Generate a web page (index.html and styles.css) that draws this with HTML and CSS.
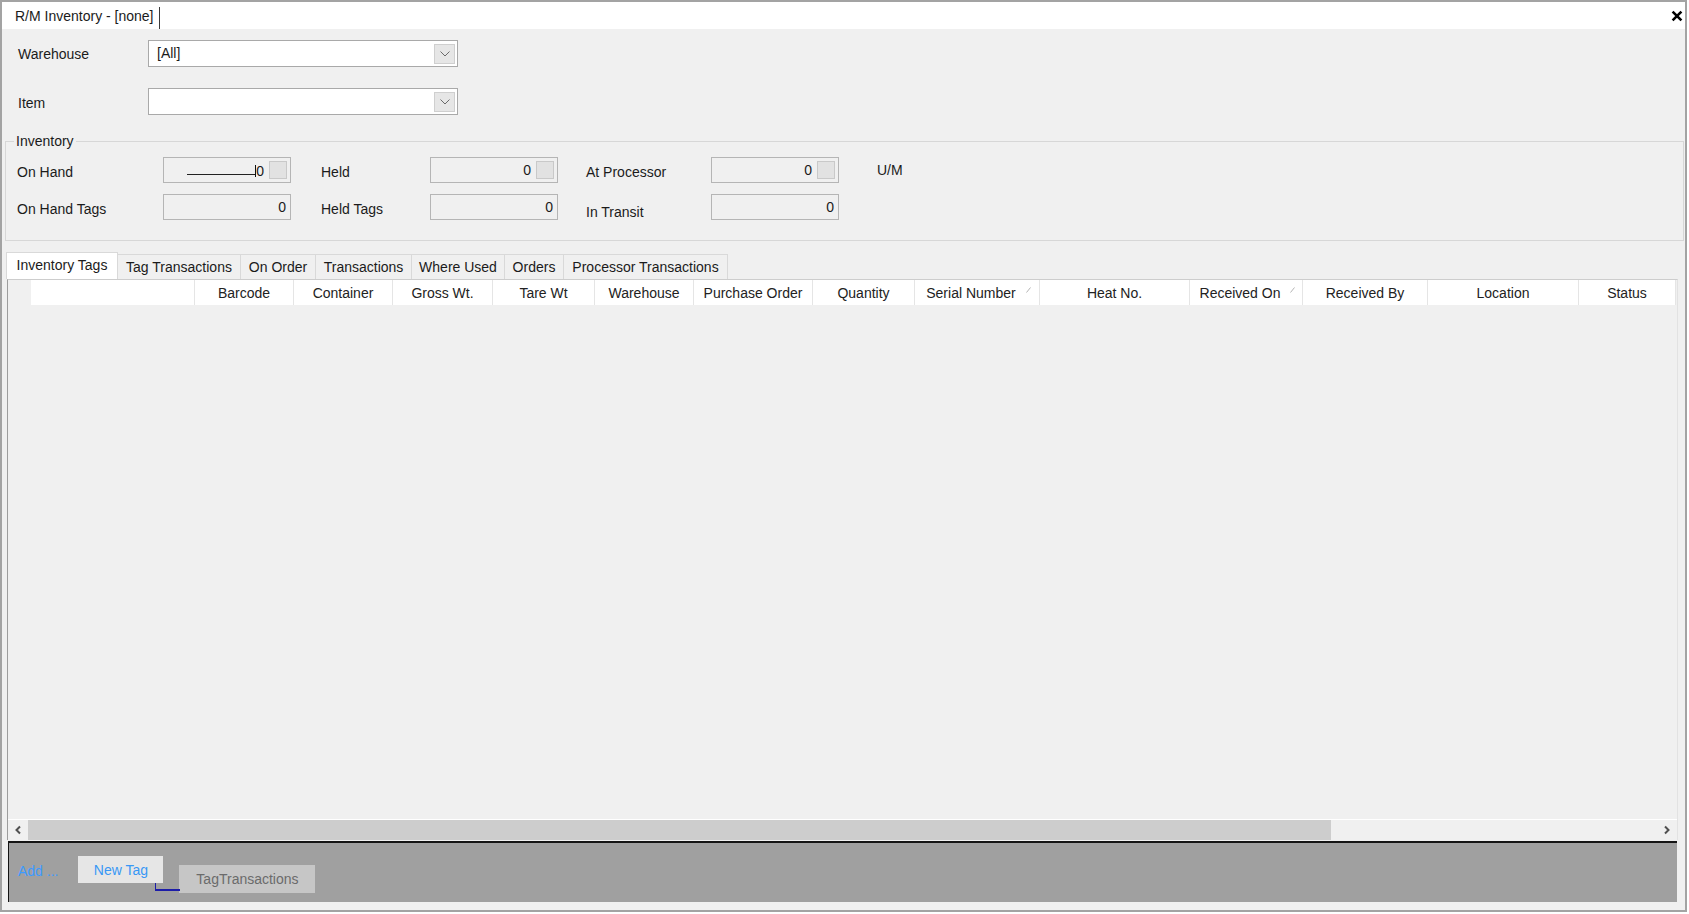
FILE: index.html
```html
<!DOCTYPE html>
<html>
<head>
<meta charset="utf-8">
<title>R/M Inventory</title>
<link rel="stylesheet" href="styles.css">
</head>
<body>
<div class="window">
  <div class="titlebar">
    <div class="doc-tab">R/M Inventory - [none]</div>
    <div class="doc-sep"></div>
    <button class="close" aria-label="Close">
      <svg width="12" height="12" viewBox="0 0 12 12"><path d="M1.6 1.6 L10.4 10.4 M10.4 1.6 L1.6 10.4" stroke="#000" stroke-width="2.6" fill="none"/></svg>
    </button>
  </div>

  <div class="content">
    <div class="field-row">
      <label class="field-label">Warehouse</label>
      <div class="combo">
        <span class="combo-text">[All]</span>
        <span class="combo-btn"><svg width="10" height="6" viewBox="0 0 10 6"><polyline points="0.5,0.5 5,5 9.5,0.5" fill="none" stroke="#6a6a6a" stroke-width="1"/></svg></span>
      </div>
    </div>
    <div class="field-row">
      <label class="field-label">Item</label>
      <div class="combo">
        <span class="combo-text"></span>
        <span class="combo-btn"><svg width="10" height="6" viewBox="0 0 10 6"><polyline points="0.5,0.5 5,5 9.5,0.5" fill="none" stroke="#6a6a6a" stroke-width="1"/></svg></span>
      </div>
    </div>

    <fieldset class="group">
      <legend>Inventory</legend>
      <div class="inv-grid">
        <span class="inv-label">On Hand</span>
        <div class="num-box spin-box"><span class="scribble"></span><span class="caret-val">0</span><span class="spin"></span></div>
        <span class="inv-label shift">Held</span>
        <div class="num-box spin-box"><span>0</span><span class="spin"></span></div>
        <span class="inv-label">At Processor</span>
        <div class="num-box spin-box"><span>0</span><span class="spin"></span></div>
        <span class="inv-label um">U/M</span>

        <span class="inv-label">On Hand Tags</span>
        <div class="num-box">0</div>
        <span class="inv-label shift">Held Tags</span>
        <div class="num-box">0</div>
        <span class="inv-label low">In Transit</span>
        <div class="num-box">0</div>
        <span></span>
      </div>
    </fieldset>

    <div class="tabs">
      <div class="tab active t1">Inventory Tags</div>
      <div class="tab t2">Tag Transactions</div>
      <div class="tab t3">On Order</div>
      <div class="tab t4">Transactions</div>
      <div class="tab t5">Where Used</div>
      <div class="tab t6">Orders</div>
      <div class="tab t7">Processor Transactions</div>
    </div>

    <div class="datagrid">
      <div class="grid-header">
        <div class="corner"></div>
        <div class="hcell"></div>
        <div class="hcell">Barcode</div>
        <div class="hcell">Container</div>
        <div class="hcell">Gross Wt.</div>
        <div class="hcell">Tare Wt</div>
        <div class="hcell">Warehouse</div>
        <div class="hcell">Purchase Order</div>
        <div class="hcell">Quantity</div>
        <div class="hcell sorted">Serial Number<svg class="sort-glyph" width="5" height="6" viewBox="0 0 5 6"><line x1="0.5" y1="5.5" x2="4.5" y2="0.5" stroke="#b4b4b4" stroke-width="1"/></svg></div>
        <div class="hcell">Heat No.</div>
        <div class="hcell sorted sorted-b">Received On<svg class="sort-glyph" width="5" height="6" viewBox="0 0 5 6"><line x1="0.5" y1="5.5" x2="4.5" y2="0.5" stroke="#b4b4b4" stroke-width="1"/></svg></div>
        <div class="hcell">Received By</div>
        <div class="hcell">Location</div>
        <div class="hcell">Status</div>
      </div>
      <div class="grid-body"></div>
      <div class="hscroll">
        <span class="sb-arrow"><svg width="8" height="10" viewBox="0 0 8 10"><polyline points="6,1.5 2.5,5 6,8.5" fill="none" stroke="#505050" stroke-width="2"/></svg></span>
        <span class="sb-thumb"></span>
        <span class="sb-track"></span>
        <span class="sb-arrow"><svg width="8" height="10" viewBox="0 0 8 10"><polyline points="2,1.5 5.5,5 2,8.5" fill="none" stroke="#505050" stroke-width="2"/></svg></span>
      </div>
    </div>

    <div class="panel">
      <span class="add-link">Add ...</span>
      <span class="node node-new">New Tag</span>
      <span class="node node-tx">TagTransactions</span>
      <span class="connector"></span>
    </div>
  </div>
</div>
</body>
</html>
```

FILE: styles.css
```css
* { box-sizing: border-box; }
html, body { margin: 0; padding: 0; background: #ffffff; }
body {
  font-family: "Liberation Sans", Arial, sans-serif;
  font-size: 14px;
  line-height: 16px;
  color: #1b1b1b;
}

.window {
  width: 1687px;
  height: 912px;
  border: 2px solid #a3a3a3;
  background: #f0f0f0;
  display: flex;
  flex-direction: column;
  overflow: hidden;
}

/* title bar */
.titlebar {
  height: 27px;
  flex: none;
  background: #ffffff;
  display: flex;
  align-items: center;
}
.doc-tab { padding: 0 5px 0 13px; }
.doc-sep {
  width: 1px;
  height: 22px;
  align-self: flex-end;
  background: #3a3a3a;
}
.close {
  margin-left: auto;
  margin-right: 2px;
  width: 12px;
  height: 12px;
  padding: 0;
  border: 0;
  background: none;
  display: flex;
}

/* content */
.content {
  flex: 1;
  display: flex;
  flex-direction: column;
  padding-top: 11px;
}
.field-row {
  display: flex;
  align-items: center;
  height: 27px;
  padding-left: 16px;
}
.field-row + .field-row { margin-top: 21px; }
.field-row + .field-row .field-label { padding-top: 2px; }
.field-label { width: 130px; }
.combo {
  width: 310px;
  height: 27px;
  border: 1px solid #a9a9a9;
  background: #ffffff;
  display: flex;
  align-items: center;
  padding: 0 2px 0 8px;
}
.combo-text { flex: 1; margin-top: -1px; }
.combo-btn {
  width: 21px;
  height: 20px;
  border: 1px solid #cfcfcf;
  background: #e6e6e6;
  display: flex;
  align-items: center;
  justify-content: center;
}

/* inventory group */
.group {
  margin: 18px 1px 0 3px;
  padding: 8px 0 20px 8px;
  border: 1px solid #d7d7d7;
  min-width: 0;
}
.group legend { padding: 0 2px; line-height: 16px; }
.inv-grid {
  margin-left: 3px;
  display: grid;
  grid-template-columns: 118px 128px 83px 128px 97px 128px auto;
  grid-template-rows: 26px 26px;
  column-gap: 28px;
  row-gap: 11px;
  align-items: center;
}
.inv-label { padding-top: 3px; }
.inv-label.shift { padding-left: 2px; }
.inv-label.um { margin-left: 10px; padding-top: 0; }
.inv-label.low { padding-top: 9px; }
.num-box {
  height: 26px;
  border: 1px solid #b5b5b5;
  background: #f0f0f0;
  display: flex;
  align-items: center;
  justify-content: flex-end;
  padding-right: 4px;
}
.num-box.spin-box { padding-right: 3px; }
.spin {
  width: 18px;
  height: 18px;
  margin-left: 5px;
  border: 1px solid #c9c9c9;
  background: #e2e2e2;
}
.scribble {
  width: 68px;
  height: 1px;
  margin-top: 9px;
  background: #222;
}
.caret-val {
  border-left: 1px solid #111;
  line-height: 12px;
  margin-top: 1px;
}

/* tabs */
.tabs {
  display: flex;
  align-items: flex-end;
  height: 27px;
  margin: 11px 0 0 4px;
}
.tab {
  height: 25px;
  border: 1px solid #d9d9d9;
  border-bottom: 0;
  background: #f0f0f0;
  display: flex;
  align-items: center;
  justify-content: center;
  margin-left: -1px;
  flex: none;
}
.tab.active {
  height: 27px;
  background: #ffffff;
  margin-left: 0;
  padding-bottom: 2px;
  position: relative;
  z-index: 1;
}
.t1 { width: 112px; }
.t2 { width: 124px; }
.t3 { width: 76px; }
.t4 { width: 97px; }
.t5 { width: 94px; }
.t6 { width: 60px; }
.t7 { width: 165px; }

/* data grid */
.datagrid {
  margin-left: 5px;
  width: 1671px;
  height: 561px;
  flex: none;
  border-top: 1px solid #cdcdcd;
  border-left: 1px solid #9d9d9d;
  border-right: 1px solid #e2e2e2;
  display: flex;
  flex-direction: column;
}
.grid-header {
  height: 25px;
  flex: none;
  display: grid;
  grid-template-columns: 23px 164px 99px 99px 100px 102px 99px 119px 102px 125px 150px 113px 125px 151px 97px;
}
.corner { background: #f0f0f0; }
.hcell {
  background: #ffffff;
  border-right: 1px solid #e5e5e5;
  display: flex;
  align-items: center;
  justify-content: center;
  position: relative;
  white-space: nowrap;
  color: #222;
}
.hcell.sorted { padding-right: 12px; }
.sort-glyph {
  position: absolute;
  right: 8px;
  top: 7px;
}
.sorted-b .sort-glyph { right: 7px; }
.grid-body { flex: 1; background: #f0f0f0; }
.hscroll {
  height: 21px;
  flex: none;
  border-top: 1px solid #ffffff;
  background: #f0f0f0;
  display: flex;
}
.sb-arrow {
  width: 20px;
  display: flex;
  align-items: center;
  justify-content: center;
}
.sb-thumb { width: 1303px; background: #cdcdcd; }
.sb-track { flex: 1; }

/* bottom designer panel */
.panel {
  margin: 1px 0 0 6px;
  width: 1669px;
  height: 61px;
  flex: none;
  border-top: 2px solid #151515;
  border-left: 1px solid #151515;
  background: #a0a0a0;
  position: relative;
  display: flex;
  align-items: flex-start;
  padding-left: 9px;
}
.add-link {
  margin-top: 20px;
  color: #3d9bff;
  flex: none;
}
.node {
  display: flex;
  align-items: center;
  justify-content: center;
  flex: none;
}
.node-new {
  margin: 13px 0 0 20px;
  width: 85px;
  height: 27px;
  background: #e6e6e6;
  color: #3898f5;
}
.node-tx {
  margin: 22px 0 0 16px;
  width: 136px;
  height: 28px;
  background: #c6c6c6;
  color: #6b6b6b;
}
.connector {
  position: absolute;
  left: 146px;
  top: 40px;
  width: 25px;
  height: 8px;
  border-left: 1px solid #1c1ca8;
  border-bottom: 2px solid #1c1ca8;
}
```
